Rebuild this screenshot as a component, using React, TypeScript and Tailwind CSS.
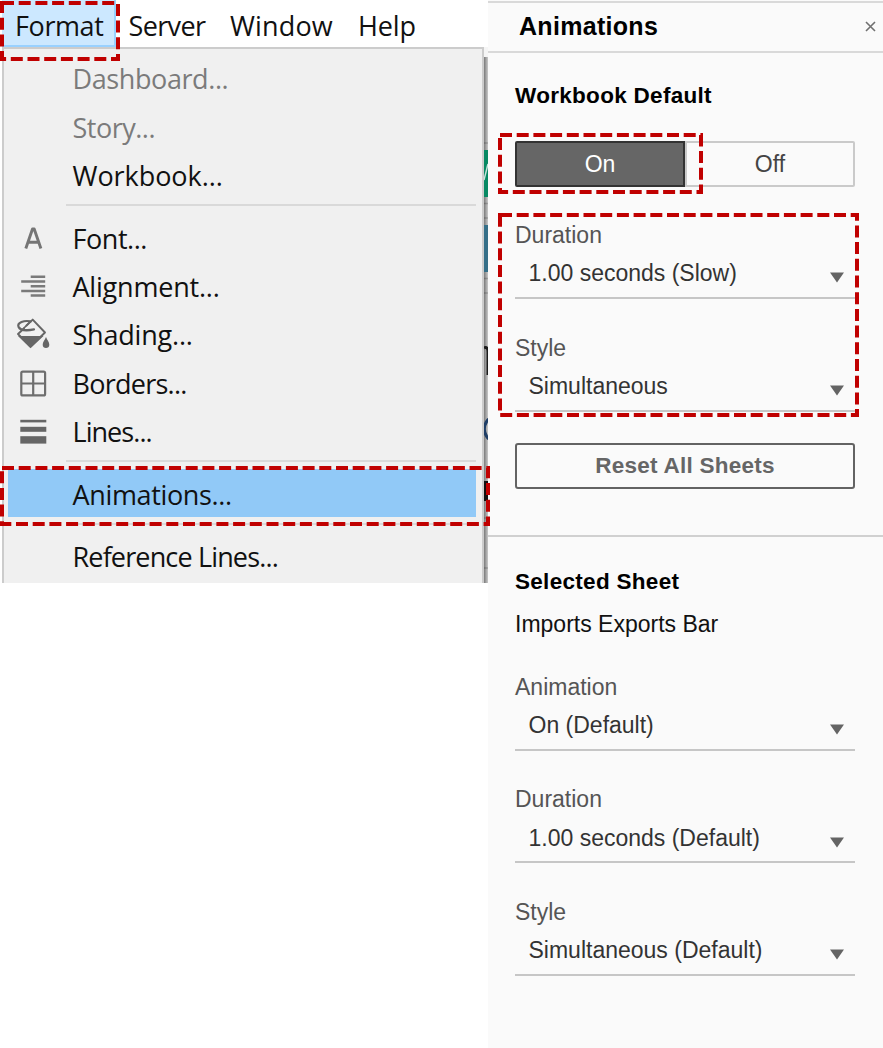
import React from "react";

type Entry = { label: string; tracking: string; disabled?: boolean; active?: boolean; icon?: React.ReactNode };

const G = "#666666";

const FontIcon = () => (
  <svg width="36" height="36" viewBox="0 0 36 36" fill="none" stroke="#757575" strokeWidth="2.9">
    <path d="M10.8 27.5 L17.5 8 H19.2 L25.9 27.5 M13 21.3 H23.6" strokeLinejoin="round" />
  </svg>
);

const AlignIcon = () => (
  <svg width="36" height="36" viewBox="0 0 36 36" stroke="#7a7a7a" strokeWidth="2.5">
    <path d="M15.7 7.8H30.2M6.2 12.5H30.2M15.7 17.2H30.2M6.2 21.9H30.2M15.7 26.6H30.2" />
  </svg>
);

const ShadingIcon = () => (
  <svg width="36" height="36" viewBox="0 0 36 36" fill="none">
    <path d="M11 9 L17.7 2.6 L30 15.5 L15.500 29.5 L3 17 L9.5 11" stroke={G} strokeWidth="1.9" strokeLinejoin="round" />
    <path d="M3 19 L28.5 19 L15.5 31.300 Z" fill={G} />
    <path d="M15.500 4.4 C9 3 2 5.7 3.5 9.7 C5 13.2 11.5 14 19 12.4" stroke={G} strokeWidth="2.2" strokeLinecap="round" />
    <path d="M15 5L8 12" stroke={G} strokeWidth="1.7" />
    <path d="M31 20 C32.3 23.3 34.3 24.8 34.3 27.8 C34.3 30 32.9 31 31 31 C29.1 31 27.7 30 27.7 27.8 C27.7 24.8 29.7 23.3 31 20Z" fill={G} />
  </svg>
);

const BordersIcon = () => (
  <svg width="36" height="36" viewBox="0 0 36 36" fill="none" stroke="#6e6e6e" strokeWidth="2.2">
    <rect x="6.3" y="5.6" width="23.8" height="23.8" rx="1.5" />
    <path d="M18.2 6V30M6.3 17.5H30.3" />
  </svg>
);

const LinesIcon = () => (
  <svg width="36" height="36" viewBox="0 0 36 36" fill={G}>
    <rect x="5.3" y="5.8" width="26" height="2.6" />
    <rect x="5.3" y="12.8" width="26" height="5" />
    <rect x="5.3" y="22.2" width="26" height="7.4" />
  </svg>
);

const groups: Entry[][] = [
  [
    { label: "Dashboard...", tracking: "tracking-[-0.4px]", disabled: true },
    { label: "Story...", tracking: "tracking-[-0.5px]", disabled: true },
    { label: "Workbook...", tracking: "tracking-[-0.05px]" },
  ],
  [
    { label: "Font...", tracking: "tracking-[-0.45px]", icon: <FontIcon /> },
    { label: "Alignment...", tracking: "tracking-[-0.2px]", icon: <AlignIcon /> },
    { label: "Shading...", tracking: "tracking-[-0.2px]", icon: <ShadingIcon /> },
    { label: "Borders...", tracking: "tracking-[-0.75px]", icon: <BordersIcon /> },
    { label: "Lines...", tracking: "tracking-[-0.95px]", icon: <LinesIcon /> },
  ],
  [{ label: "Animations...", tracking: "tracking-[-0.35px]", active: true }],
  [{ label: "Reference Lines...", tracking: "tracking-[-0.85px]" }],
];

function MenuRow({ e }: { e: Entry }) {
  return (
    <div className={"ml-[4px] mr-[6px] flex h-[48.4px] items-center " + (e.active ? "bg-[#91c9f7]" : "")}>
      <div className="w-[43px] pl-[7px] pt-[4px]">{e.icon && <div className="w-[36px]">{e.icon}</div>}</div>
      <span
        className={
          "ml-[21.5px] whitespace-nowrap pt-[4px] text-[27px] leading-[40px] " +
          e.tracking +
          (e.disabled ? " text-[#7b7b7b]" : " text-[#111]")
        }
      >
        {e.label}
      </span>
    </div>
  );
}

function Menu() {
  return (
    <div className="ml-[2px] flex h-[536px] w-[482px] flex-col overflow-hidden border-l-2 border-r-2 border-t-2 border-[#cccccc] bg-[#f0f0f0] pt-[4px]">
      {groups.map((g, i) => (
        <React.Fragment key={i}>
          {i > 0 && (
            <div className="flex h-[14.2px] shrink-0 items-center pl-[62px] pr-[6px]">
              <div className="h-[2px] w-full bg-[#d9d9d9]" />
            </div>
          )}
          {g.map((e) => (
            <MenuRow key={e.label} e={e} />
          ))}
        </React.Fragment>
      ))}
    </div>
  );
}

function Backdrop() {
  return (
    <svg className="block" width="4" height="536" viewBox="484 47 4 536">
      <defs>
        <linearGradient id="shade" x1="0" x2="1" y1="0" y2="0">
          <stop offset="0" stopColor="#000" stopOpacity="0.5" />
          <stop offset="1" stopColor="#000" stopOpacity="0.18" />
        </linearGradient>
      </defs>
      <rect x="484" y="47" width="4" height="536" fill="#f5f5f5" />
      <path d="M484 143H488M484 203.5H488M484 218H488M484 278.5H488M484 293H488M484 518H488M484 568H488" stroke="#c8c8c8" strokeWidth="1.5" />
      <rect x="484" y="57" width="4" height="526" fill="url(#shade)" />
      <rect x="484" y="150" width="4" height="47" fill="#078963" />
      <path d="M484 180L488 164" stroke="#c8e4dd" strokeWidth="1.5" />
      <rect x="484" y="225" width="4" height="47" fill="#356f88" />
      <path d="M484 348Q488 346 488 352V375" fill="none" stroke="#1b1b1b" strokeWidth="3" />
      <path d="M488.5 419Q480 429 488.5 439" fill="none" stroke="#1f3e66" strokeWidth="3" />
      <rect x="484" y="481" width="4" height="20" fill="#111" />
    </svg>
  );
}

function Field({ label, value }: { label: string; value: string }) {
  return (
    <div className="h-[77px] text-[23px] leading-[26px]">
      <div className="text-[#555]">{label}</div>
      <div className="flex h-[51px] items-start justify-between border-b-2 border-[#c6c6c6] pl-[13.5px] pr-[11px] pt-[12.3px] text-[#333]">
        <span>{value}</span>
        <svg className="mt-[12px]" width="14" height="11" viewBox="0 0 14 11">
          <path d="M0 0.5H14L7 10.5Z" fill="#646464" />
        </svg>
      </div>
    </div>
  );
}

function Panel() {
  return (
    <div className="flex h-[1048px] w-[395px] flex-col bg-[#fafafa] pt-px font-['Liberation_Sans',Arial,sans-serif]">
      <div className="flex h-[52px] items-center justify-between border-b-2 border-t-2 border-[#d9d9d9] pl-[31px] pr-[7px]">
        <span className="-mt-[2px] text-[25px] font-bold leading-[28px] tracking-[0.3px] text-black">Animations</span>
        <svg className="-mt-[2px]" width="11" height="11" viewBox="0 0 11 11" stroke="#707070" strokeWidth="1.6">
          <path d="M1 1L10 10M10 1L1 10" />
        </svg>
      </div>
      <div className="flex h-[482px] w-[394px] flex-col px-[27px] pt-[29px]">
        <div className="text-[22.5px] font-bold leading-[28px] tracking-[0.3px] text-black">Workbook Default</div>
        <div className="mt-[31px] flex h-[46px] w-[340px] text-[23px] leading-[26px]">
          <div className="flex w-[170px] items-center justify-center rounded-l-[2px] border-2 border-[#333] bg-[#666] text-white">On</div>
          <div className="flex w-[170px] items-center justify-center rounded-r-[2px] border-2 border-[#cacaca] text-[#444]">Off</div>
        </div>
        <div className="mt-[35px] flex flex-col gap-[35.7px]">
          <Field label="Duration" value="1.00 seconds (Slow)" />
          <Field label="Style" value="Simultaneous" />
        </div>
        <div className="mt-[31px] flex h-[46px] items-center justify-center rounded-[3px] border-2 border-[#636363] text-[22.5px] font-bold tracking-[0.25px] text-[#666]">
          Reset All Sheets
        </div>
      </div>
      <div className="h-[2px] shrink-0 bg-[#d0d0d0]" />
      <div className="flex w-[394px] flex-col px-[27px] pt-[31px]">
        <div className="text-[22.5px] font-bold leading-[28px] tracking-[0.3px] text-black">Selected Sheet</div>
        <div className="mt-[14px] text-[23px] leading-[28px] text-[#111]">Imports Exports Bar</div>
        <div className="mt-[35.8px] flex flex-col gap-[35.7px]">
          <Field label="Animation" value="On (Default)" />
          <Field label="Duration" value="1.00 seconds (Default)" />
          <Field label="Style" value="Simultaneous (Default)" />
        </div>
      </div>
    </div>
  );
}

function Callouts() {
  return (
    <svg className="pointer-events-none absolute left-0 top-0" width="883" height="1048" fill="none" stroke="#c00000" strokeWidth="4" strokeDasharray="12 4.7">
      <rect x="2" y="3" width="116" height="56" />
      <rect x="500" y="135" width="201" height="57" />
      <rect x="500" y="215" width="357" height="200" />
      <rect x="2" y="468" width="486" height="56" />
    </svg>
  );
}

export default function App() {
  return (
    <div className="relative flex h-[1048px] w-[883px] overflow-hidden bg-white font-['Open_Sans','Noto_Sans',sans-serif]">
      <div className="w-[488px]">
        <div className="flex h-[47px] items-center text-[27px] leading-[40px] text-[#111]">
          <div className="ml-[2px] flex h-[47px] w-[114px] items-center border-b-2 border-r-2 border-[#99d1ff] bg-[#cce8ff] pl-[13px] pt-[6px] tracking-[-0.4px]">Format</div>
          <div className="ml-[12.5px] w-[101.5px] pt-[5px] tracking-[-0.65px]">Server</div>
          <div className="w-[128px] pt-[5px] tracking-[0.15px]">Window</div>
          <div className="pt-[5px] tracking-[-0.15px]">Help</div>
        </div>
        <div className="flex">
          <Menu />
          <Backdrop />
        </div>
      </div>
      <Panel />
      <Callouts />
    </div>
  );
}
